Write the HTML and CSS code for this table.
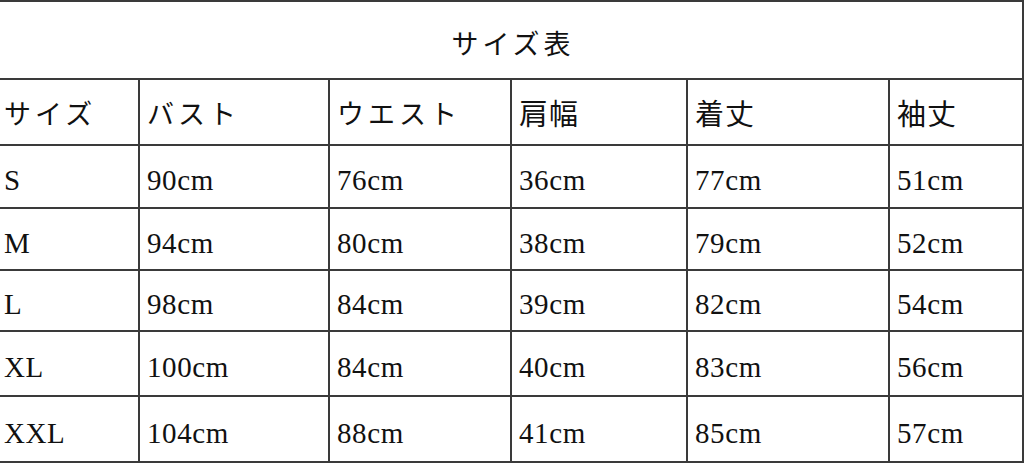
FILE: index.html
```html
<!DOCTYPE html>
<html lang="ja">
<head>
<meta charset="utf-8">
<title>サイズ表</title>
<link rel="stylesheet" href="styles.css">
</head>
<body>
<table class="size-table">
  <colgroup>
    <col class="c1"><col class="c2"><col class="c3"><col class="c4"><col class="c5"><col class="c6">
  </colgroup>
  <tr class="row-title"><th colspan="6" class="title">サイズ表</th></tr>
  <tr class="row-head">
    <th class="jp">サイズ</th><th class="jp">バスト</th><th class="jp">ウエスト</th><th class="kanji">肩幅</th><th class="kanji">着丈</th><th class="kanji">袖丈</th>
  </tr>
  <tr class="r1"><td>S</td><td>90cm</td><td>76cm</td><td>36cm</td><td>77cm</td><td>51cm</td></tr>
  <tr class="r2"><td>M</td><td>94cm</td><td>80cm</td><td>38cm</td><td>79cm</td><td>52cm</td></tr>
  <tr class="r3"><td>L</td><td>98cm</td><td>84cm</td><td>39cm</td><td>82cm</td><td>54cm</td></tr>
  <tr class="r4"><td>XL</td><td>100cm</td><td>84cm</td><td>40cm</td><td>83cm</td><td>56cm</td></tr>
  <tr class="r5"><td>XXL</td><td>104cm</td><td>88cm</td><td>41cm</td><td>85cm</td><td>57cm</td></tr>
</table>
</body>
</html>
```
FILE: styles.css
```css
html, body {
  margin: 0;
  padding: 0;
  background: #fff;
}
.size-table {
  border-collapse: collapse;
  table-layout: fixed;
  width: 1023px;
  font-family: "Liberation Serif", "Noto Sans CJK JP", serif;
  color: #111;
}
.c1 { width: 139px; }
.c2 { width: 190px; }
.c3 { width: 182px; }
.c4 { width: 176px; }
.c5 { width: 202px; }
.c6 { width: 134px; }
.size-table th,
.size-table td {
  border: 2px solid #3a3a3a;
  padding: 0 0 0 7px;
  text-align: left;
  font-weight: normal;
  vertical-align: middle;
}
.size-table tr > :first-child {
  border-left: none;
  padding-left: 4px;
}
.size-table .title {
  text-align: center;
  font-size: 27px;
  letter-spacing: 4px;
  padding: 4px 0 0 0;
  font-family: "Noto Sans CJK JP", sans-serif;
  font-weight: 400;
}
.row-title { height: 78px; }
.row-head { height: 66px; }
.row-head th {
  font-family: "Noto Sans CJK JP", sans-serif;
  font-weight: 400;
  font-size: 27px;
}
.row-head .jp { letter-spacing: 4px; }
.row-head .kanji { font-size: 29px; letter-spacing: 1px; }
.size-table td {
  font-size: 29px;
  letter-spacing: 0.6px;
  padding-top: 8px;
}
.r1 { height: 63px; }
.r2 { height: 62px; }
.r3 { height: 61px; }
.r4 { height: 65px; }
.r5 { height: 66px; }
```
